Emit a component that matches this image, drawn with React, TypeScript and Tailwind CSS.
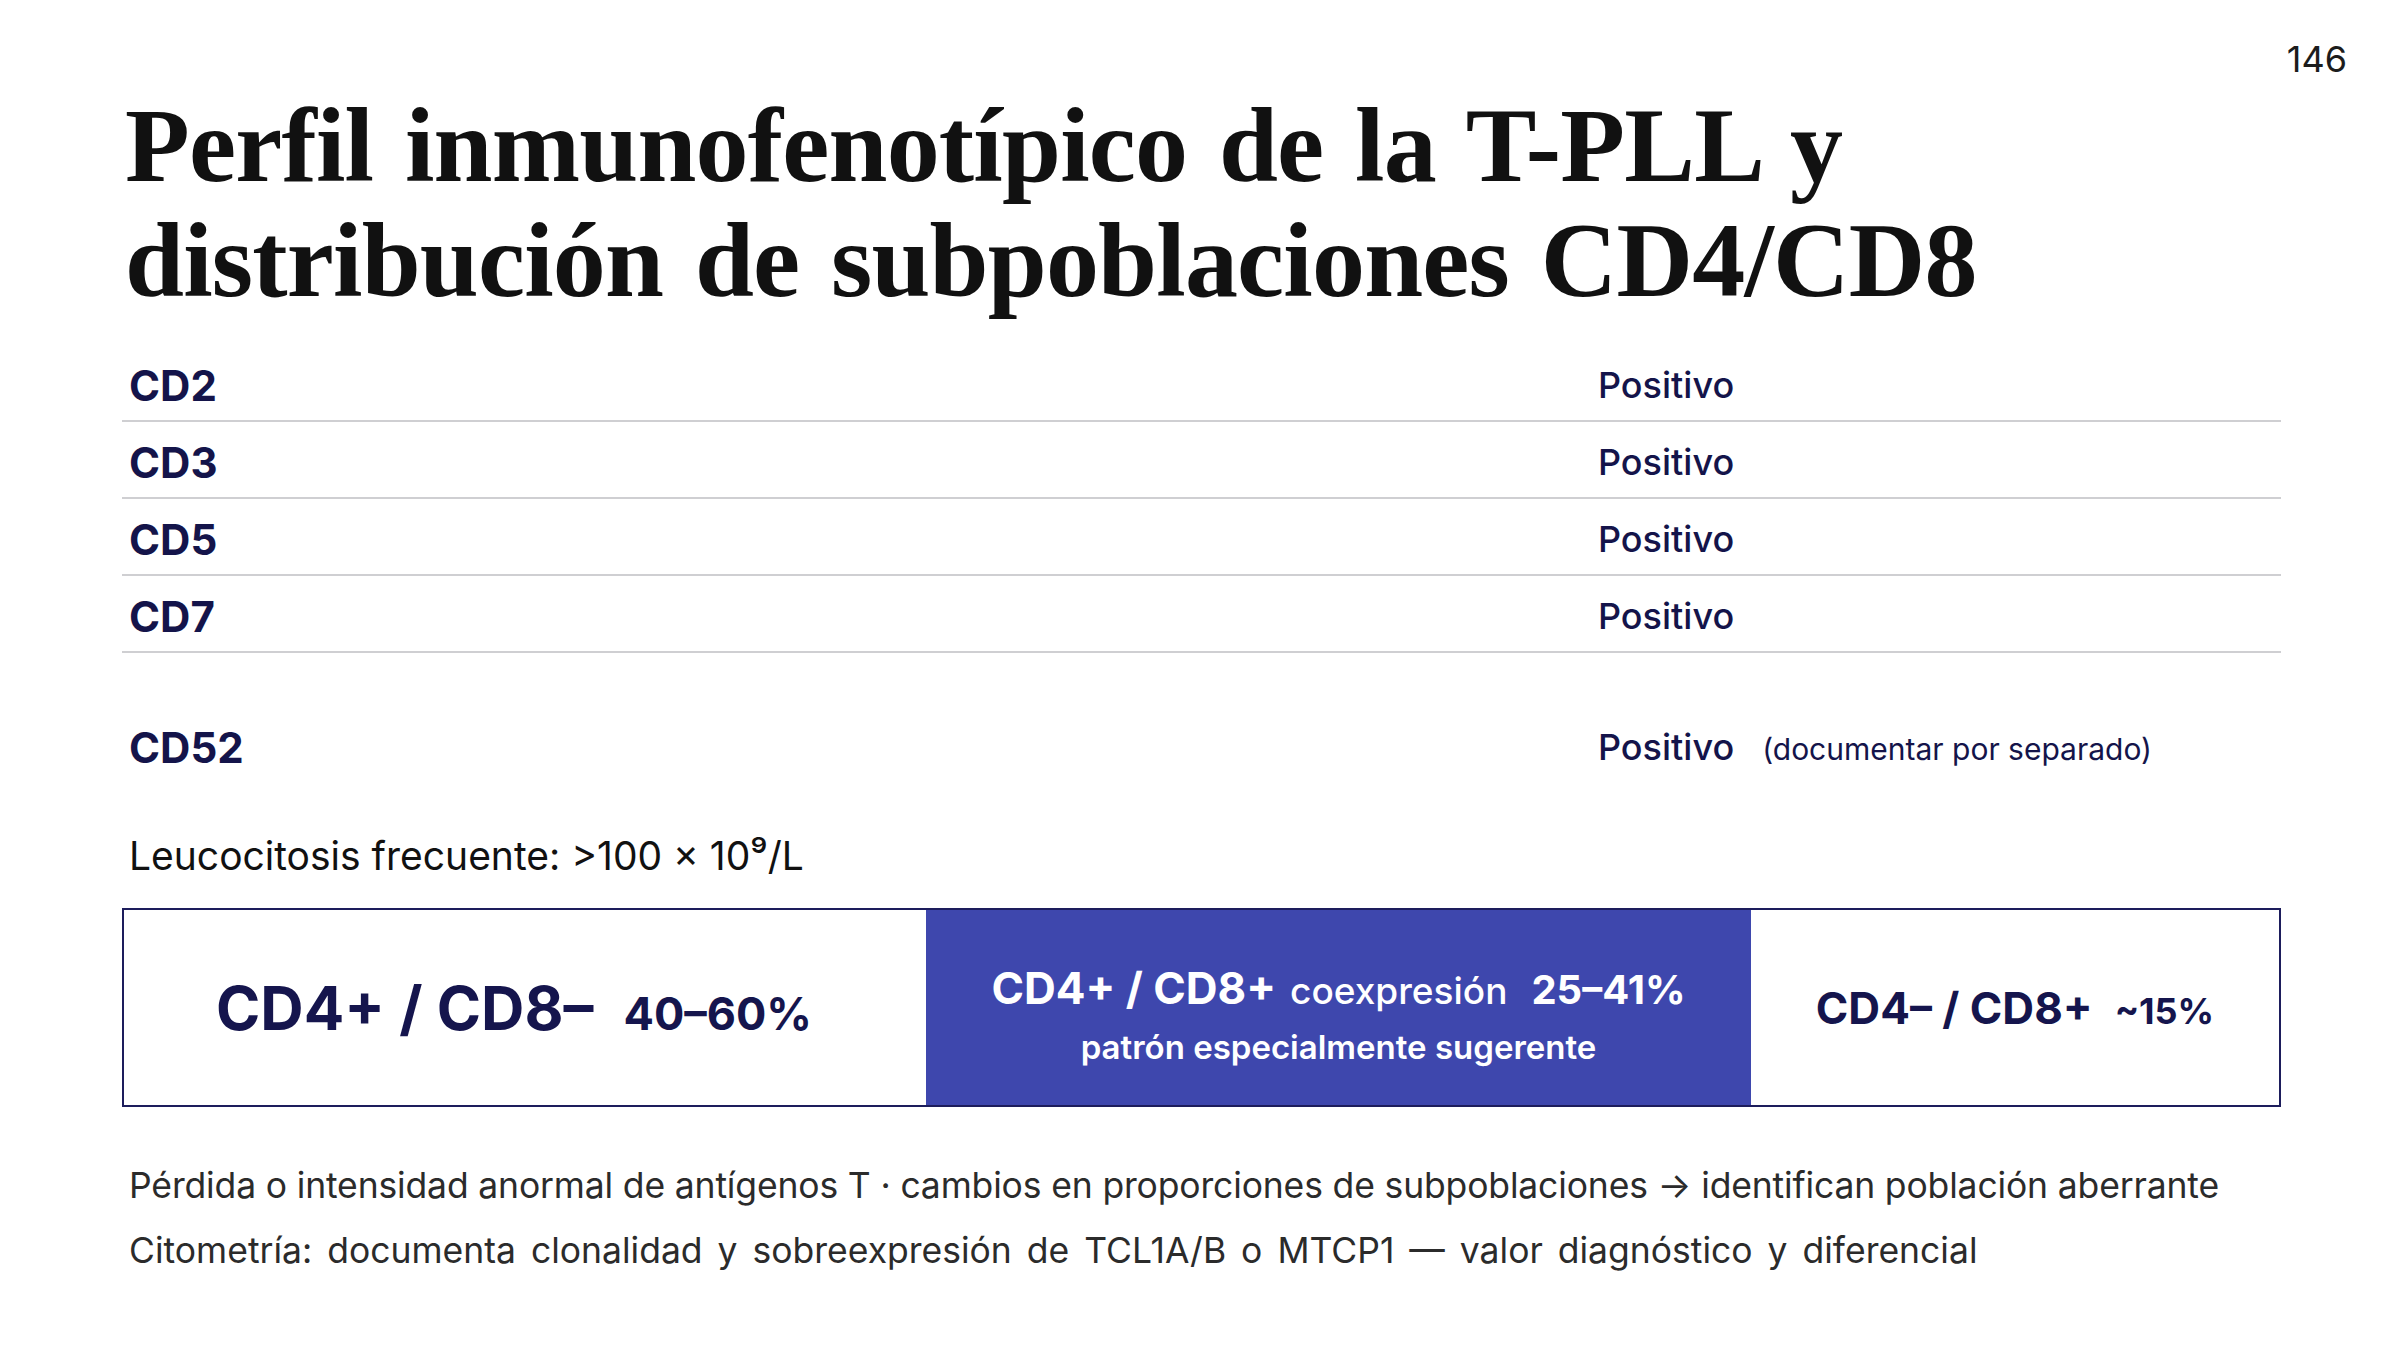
const sans = "font-['Inter','Liberation_Sans',sans-serif]";

const markers = ["CD2", "CD3", "CD5", "CD7"];

function MarkerRow({ label, children, last }: { label: string; children: React.ReactNode; last?: boolean }) {
  return (
    <div
      className={`flex h-[77px] items-center px-[7px] pt-[5px] ${last ? "" : "border-b-2 border-[#cfcfd2]"}`}
    >
      <div className="w-[1469px] text-[42px] font-bold text-[#14144a]">{label}</div>
      <div className="flex items-baseline gap-[28px] text-[#14144a]">{children}</div>
    </div>
  );
}

export default function App() {
  return (
    <div className={`w-[2400px] h-[1350px] bg-white overflow-hidden ${sans}`}>
      <div className="flex flex-col pl-[122px] pr-[119px] pt-[39px]">
        <div className="self-end -mr-[66px] text-[36px] leading-[40px] text-[#1c1c1c]">146</div>

        <h1 className="mt-[9px] font-['Liberation_Serif','Times_New_Roman',serif] text-[106px] leading-[115px] font-bold text-[#111111] pl-[3px] tracking-[-0.8px] [word-spacing:6px]">
          Perfil inmunofenotípico de la T-PLL y
          <br />
          distribución de subpoblaciones CD4/CD8
        </h1>

        <div className="mt-[27px] flex flex-col">
          {markers.map((m) => (
            <MarkerRow key={m} label={m}>
              <span className="text-[36px] font-medium">Positivo</span>
            </MarkerRow>
          ))}
        </div>

        <div className="mt-[53px]">
          <MarkerRow label="CD52" last>
            <span className="text-[36px] font-medium">Positivo</span>
            <span className="text-[30px]">(documentar por separado)</span>
          </MarkerRow>
        </div>

        <div className="mt-[49px] pl-[7px] text-[39px] leading-[48px] text-[#111111]">
          Leucocitosis frecuente: &gt;100 × 10⁹/L
        </div>

        <div className="mt-[28px] flex h-[199px] border-2 border-[#1d1d5c]">
          <div className="flex w-[802px] items-baseline justify-center gap-[30px] self-center pr-[22px] text-[#15154d] font-bold">
            <span className="text-[60px]">CD4+ / CD8–</span>
            <span className="text-[45px]">40–60%</span>
          </div>
          <div className="flex w-[825px] flex-col items-center justify-center gap-[2px] pt-[12px] bg-[#3e47ad] text-white">
            <div className="flex items-baseline gap-[14px]">
              <span className="text-[44px] font-bold">CD4+ / CD8+</span>
              <span className="text-[37px] font-medium">coexpresión</span>
              <span className="ml-[10px] text-[40px] font-bold">25–41%</span>
            </div>
            <div className="text-[33px] font-semibold">patrón especialmente sugerente</div>
          </div>
          <div className="flex flex-1 items-baseline justify-center gap-[22px] self-center text-[#15154d] font-bold">
            <span className="text-[44px]">CD4– / CD8+</span>
            <span className="text-[36px]">~15%</span>
          </div>
        </div>

        <div className="mt-[46px] pl-[7px] text-[35.5px] leading-[65px] text-[#2b2b2b]">
          <p className="tracking-[-0.15px]">
            Pérdida o intensidad anormal de antígenos T · cambios en proporciones de subpoblaciones → identifican
            población aberrante
          </p>
          <p className="[word-spacing:5px]">
            Citometría: documenta clonalidad y sobreexpresión de TCL1A/B o MTCP1 — valor diagnóstico y diferencial
          </p>
        </div>
      </div>
    </div>
  );
}
